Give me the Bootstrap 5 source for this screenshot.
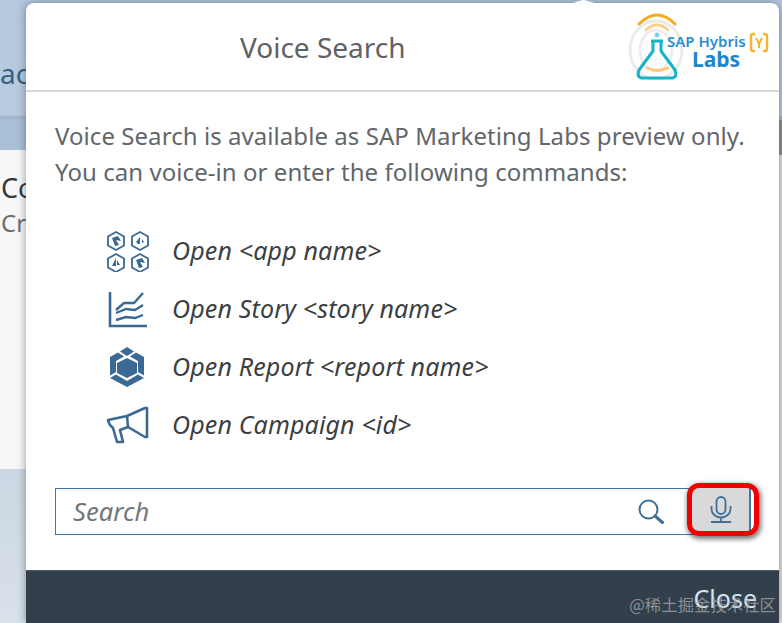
<!DOCTYPE html>
<html lang="en"><head><meta charset="utf-8"><title>Voice Search</title>
<link rel="stylesheet" href="https://cdn.jsdelivr.net/npm/bootstrap@5.3.0/dist/css/bootstrap.min.css">
<style>
html,body{height:623px;overflow:hidden}
body{background:linear-gradient(180deg,#b5c8de 0,#c3d1e0 60%,#d9e1e9 100%);font-family:"Noto Sans","Open Sans",sans-serif;position:relative}
.bg-head{height:116px;color:#346187;font-size:28px;padding-top:52px}
.bg-strip{height:34px;background:#a9bfd6;border-top:3px solid #a3b6ca}
.bg-panel{height:319px;background:#f7f7f7;padding-top:21px;padding-left:1px;color:#32363a;font-size:27px;line-height:34px}
.bg-panel small{display:block;font-size:24px;color:#6a6d70;margin-top:1px}
.vs-rail{position:absolute;right:0;top:120px;width:3px;height:503px;background:linear-gradient(#8f8f8f 35px,#e2e2e2 35px)}
.vs-win{position:absolute;left:26px;top:3px;width:753px;height:620px;background:#fff;border-radius:8px 8px 0 0;box-shadow:0 0 9px rgba(40,55,70,.5)}
.vs-tip{position:absolute;left:543px;top:-3px;width:29px;height:4px;background:#fff;clip-path:polygon(14px 0,15px 0,29px 4px,0 4px)}
.vs-head{height:89px;border-bottom:2px solid #d9d9d9;padding-top:25px}
.vs-title{font-size:28px;color:#5f6265;margin-left:214px;line-height:38px}
.vs-logo{position:absolute;left:602px;top:9px}
.vs-body{padding:26px 26px 0 29px;color:#62666a;font-size:24px;line-height:36px;letter-spacing:.06px;white-space:nowrap}
.vs-cmds{margin:31px 0 0 51px;font-style:italic;color:#3b3f43;font-size:25px;letter-spacing:.15px}
.vs-cmd{height:58px;gap:22px}
.vs-ico{width:44px;height:44px;flex:none}
.vs-search{height:47px;margin-top:35px;width:696px;border:1px solid #3f79a8;padding-left:17px;font-style:italic;color:#74777a;font-size:25.500px;line-height:45px}
.vs-mag{margin-left:auto;margin-right:25px}
.vs-gap{width:61px}
.vs-mic{position:absolute;left:661px;top:480px;width:72px;height:53px;background:linear-gradient(90deg,#d9d9d9 57px,#3f79a8 57px,#3f79a8 59px,#fff 59px);border:5px solid #f00000;border-radius:12px;box-shadow:1px 2px 5px 1px rgba(0,0,0,.55);display:flex;align-items:center;justify-content:center;padding-right:5px}
.vs-foot{height:53px;margin-top:35px;background:#333f4b;border-top:1px solid #4a5d70;color:#d5e6f3;font-size:25px;line-height:36px;text-align:right;padding:9px 22px 0 0}
.vs-mark{position:absolute;right:6px;bottom:6px;font-family:"Noto Sans CJK SC","Noto Sans",sans-serif;font-size:16.4px;color:rgba(170,175,180,.72)}
</style></head><body>
<div class="bg-head overflow-hidden">ac</div>
<div class="bg-strip"></div>
<div class="bg-panel"><div>Co</div><small>Cr</small></div>
<div class="vs-rail"></div>
<div class="vs-win">
  <div class="vs-tip"></div>
  <div class="vs-head"><div class="vs-title">Voice Search</div></div>
  <svg class="vs-logo" width="148" height="76" viewBox="0 0 148 76" aria-hidden="true">
    <ellipse cx="28" cy="38" rx="26" ry="29" fill="none" stroke="#ebebeb" stroke-width="3"/>
    <ellipse cx="28" cy="38" rx="16" ry="20" fill="none" stroke="#eeeeee" stroke-width="3"/>
    <path d="M11 12Q29 -6 47 12" fill="none" stroke="#f7ab1a" stroke-width="3" stroke-linecap="round"/>
    <path d="M18 18Q29 8 40 18" fill="none" stroke="#fbd08d" stroke-width="3" stroke-linecap="round"/>
    <circle cx="29" cy="23" r="2.4" fill="#7fd0e8"/>
    <path d="M23 29H35M25 29V39L11 58Q8 66 15 66H43Q50 66 47 58L33 39V29" fill="none" stroke="#17b3c9" stroke-width="3" stroke-linejoin="round"/>
    <path d="M19 56Q29 61 40 56" fill="none" stroke="#fbc77a" stroke-width="3" stroke-linecap="round"/>
    <text x="39" y="35" font-family="Noto Sans,sans-serif" font-weight="600" font-size="15" fill="#2a8fd3">SAP Hybris</text>
    <text x="64" y="55" font-family="Noto Sans,sans-serif" font-weight="700" font-size="21" fill="#1d86cb">Labs</text>
    <path d="M127 22H125Q123 22 123 24V37Q123 39 125 39H127M135 22H137Q139 22 139 24V37Q139 39 137 39H135" fill="none" stroke="#f7b52c" stroke-width="2.4"/>
    <path d="M128 26L131 32L134 26M131 32V36" fill="none" stroke="#f7b52c" stroke-width="2"/>
  </svg>
  <div class="vs-body">
    <div>Voice Search is available as SAP Marketing Labs preview only.<br>You can voice-in or enter the following commands:</div>
    <div class="vs-cmds">
      <div class="vs-cmd d-flex align-items-center">
        <svg class="vs-ico" viewBox="0 0 44 44" fill="none" stroke="#3a6a93" stroke-width="1.8" aria-hidden="true">
          <path d="M10 4L18 8.500V17.500L10 22L2 17.500V8.500Z"/><path d="M6 10L12 8L15 13L10 12L13 17L9 18Z" fill="#3a6a93" stroke="none"/>
          <path d="M34 4L42 8.500V17.500L34 22L26 17.500V8.500Z"/><path d="M30 14L34 9V16H32ZM36 11L38 14L36 15Z" fill="#3a6a93" stroke="none"/>
          <path d="M10 26L18 30.500V39.500L10 44L2 39.500V30.500Z"/><path d="M6 38L10 30V38ZM11 32L14 37H11Z" fill="#3a6a93" stroke="none"/>
          <path d="M34 26L42 30.500V39.500L34 44L26 39.500V30.500Z"/><path d="M30 32L36 30L39 35L34 34L37 39L33 40Z" fill="#3a6a93" stroke="none"/>
        </svg>
        <span>Open &lt;app name&gt;</span>
      </div>
      <div class="vs-cmd d-flex align-items-center">
        <svg class="vs-ico" viewBox="0 0 44 44" fill="none" stroke="#3a6a93" aria-hidden="true">
          <path d="M4 6V40H41" stroke-width="2.6"/>
          <path d="M10 24L18 17H28L37 7M10 27L20 23L29 24L37 19M10 34L20 31L29 32L37 29" stroke-width="2.4"/>
        </svg>
        <span>Open Story &lt;story name&gt;</span>
      </div>
      <div class="vs-cmd d-flex align-items-center">
        <svg class="vs-ico" viewBox="0 0 44 44" fill="#3a6a93" aria-hidden="true">
          <path d="M21 3L28 7.500L21 12L14 7.500Z"/>
          <path d="M4 13L12 8.500L18 12.500L10 17V28L4 31.500Z"/><path d="M38 13L30 8.500L24 12.500L32 17V28L38 31.500Z"/>
          <path d="M21 14L31 19V29L21 34L11 29V19Z"/>
          <path d="M10 30.500L21 37L32 30.500L38 34L21 43L4 34Z"/>
        </svg>
        <span>Open Report &lt;report name&gt;</span>
      </div>
      <div class="vs-cmd d-flex align-items-center">
        <svg class="vs-ico" viewBox="0 0 44 44" fill="none" stroke="#3a6a93" stroke-width="2.6" stroke-linejoin="round" aria-hidden="true">
          <path d="M2 18L21 14L39 6H41V35H39L22 25L14 28L17 40H11L7 26Q3 23 2 18Z"/><path d="M21 14L22 25"/>
        </svg>
        <span>Open Campaign &lt;id&gt;</span>
      </div>
    </div>
    <div class="vs-search d-flex align-items-center"><span>Search</span>
      <svg class="vs-mag" width="26" height="25" viewBox="0 0 26 25" fill="none" stroke="#3f6f96" aria-hidden="true"><circle cx="10.500" cy="10.500" r="9" stroke-width="2"/><path d="M17 17L24.500 23.500" stroke-width="3" stroke-linecap="round"/></svg>
      <span class="vs-gap"></span>
    </div>
  </div>
  <div class="vs-mic">
    <svg width="22" height="27" viewBox="0 0 22 27" fill="none" stroke="#3f6f96" stroke-width="1.800" aria-hidden="true"><rect x="6.500" y="1" width="9" height="17" rx="4.500"/><path d="M1.500 10V13A9.500 8.500 0 0 0 20.500 13V10M11 22V26M1 26H21"/></svg>
  </div>
  <div class="vs-foot">Close</div>
</div>
<div class="vs-mark">@稀土掘金技术社区</div>
</body></html>
